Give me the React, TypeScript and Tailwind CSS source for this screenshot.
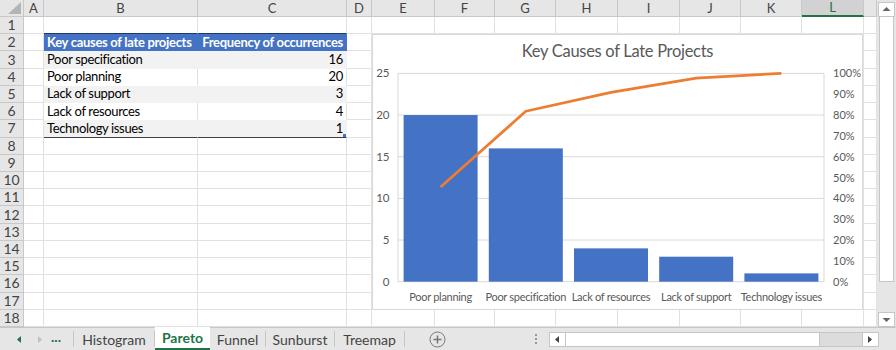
import React from "react";

const COLUMNS = ["A", "B", "C", "D", "E", "F", "G", "H", "I", "J", "K", "L", ""];

const TABLE = [
  { cause: "Poor specification", count: 16 },
  { cause: "Poor planning", count: 20 },
  { cause: "Lack of support", count: 3 },
  { cause: "Lack of resources", count: 4 },
  { cause: "Technology issues", count: 1 },
];

const SORTED = [...TABLE].sort((a, b) => b.count - a.count);
const TOTAL = SORTED.reduce((sum, d) => sum + d.count, 0);

function cellClass(row: number, col: number) {
  const inTable = col === 2 || col === 3;
  if (inTable && row === 1) return "border-r border-b border-r-[#e1e1e1] border-b-[#1f3864]";
  if (inTable && row === 2) return "bg-[#4472c4] border-r border-b border-[#4472c4] text-white font-bold tracking-[-0.3px]";
  if (inTable && row === 7) return "bg-[#f2f2f2] border-r border-b border-r-[#f2f2f2] border-b-[#404040] tracking-[-0.35px]";
  if (inTable && (row === 3 || row === 5)) return "bg-[#f2f2f2] border-r border-b border-[#f2f2f2] tracking-[-0.35px]";
  if (inTable && (row === 4 || row === 6)) return "bg-white border-r border-b border-r-[#e1e1e1] border-b-white tracking-[-0.35px]";
  return "border-r border-b border-[#e1e1e1]";
}

function cellContent(row: number, col: number) {
  if (col === 2) {
    if (row === 2) return "Key causes of late projects";
    if (row >= 3 && row <= 7) return TABLE[row - 3].cause;
  }
  if (col === 3) {
    if (row === 2) return "Frequency of occurrences";
    if (row >= 3 && row <= 7) return String(TABLE[row - 3].count);
  }
  return "";
}

function ParetoChart() {
  const left = 26;
  const right = 452;
  const base = 247.7;
  const top = 39.4;
  const catW = (right - left) / SORTED.length;
  const unit = (base - top) / 25;
  let running = 0;
  const points = SORTED.map((d, i) => {
    running += d.count;
    const x = left + (i + 0.5) * catW;
    const y = base - (running / TOTAL) * (base - top);
    return `${x},${y}`;
  }).join(" ");

  return (
    <svg width={491} height={276} className="block" fontFamily="Lato, sans-serif">
      <rect x={0.5} y={0.5} width={490} height={275} fill="white" stroke="#d9d9d9" />
      <text x={245.5} y={23} textAnchor="middle" fontSize={16.5} letterSpacing={-0.3} fill="#595959">
        Key Causes of Late Projects
      </text>
      {[0, 1, 2, 3, 4, 5].map((i) => (
        <g key={i}>
          <line x1={left} x2={right} y1={base - i * 5 * unit} y2={base - i * 5 * unit} stroke="#d9d9d9" />
          <text x={17.5} y={base - i * 5 * unit + 4} textAnchor="end" fontSize={11.5} fill="#595959">
            {i * 5}
          </text>
        </g>
      ))}
      <line x1={left} x2={left} y1={top} y2={base} stroke="#d9d9d9" />
      <line x1={right} x2={right} y1={top} y2={base} stroke="#d9d9d9" />
      {Array.from({ length: 11 }, (_, k) => (
        <text key={k} x={461} y={base - k * 0.1 * (base - top) + 4} fontSize={11} fill="#595959">
          {k * 10}%
        </text>
      ))}
      {SORTED.map((d, i) => (
        <g key={d.cause}>
          <rect
            x={left + i * catW + 5.6}
            y={base - d.count * unit}
            width={74}
            height={d.count * unit}
            fill="#4472c4"
          />
          <text
            x={left + (i + 0.5) * catW}
            y={267}
            textAnchor="middle"
            fontSize={11}
            letterSpacing={-0.3}
            fill="#595959"
          >
            {d.cause}
          </text>
        </g>
      ))}
      <polyline points={points} fill="none" stroke="#ed7d31" strokeWidth={2.75} strokeLinejoin="round" />
    </svg>
  );
}

function Arrow({ dir, color }: { dir: "left" | "right" | "up" | "down"; color: string }) {
  const d = {
    left: "M6 1 L2 4.5 L6 8 Z",
    right: "M2 1 L6 4.5 L2 8 Z",
    up: "M0.5 6 L4.5 2 L8.5 6 Z",
    down: "M0.5 3 L4.5 7 L8.5 3 Z",
  }[dir];
  return (
    <svg width={9} height={9} viewBox="0 0 9 9">
      <path d={d} fill={color} />
    </svg>
  );
}

export default function App() {
  return (
    <div className="w-[896px] h-[350px] overflow-hidden bg-white font-['Lato',sans-serif] text-[13px] text-black relative">
      <div className="flex h-[327px]">
        <div className="w-[877px] relative">
          <div className="grid grid-cols-[24px_20px_154px_149px_25px_63px_60px_61px_62px_62px_61px_61px_62px_13px] h-[17px]">
            <div className="bg-[#e6e6e6] border-r border-b border-[#c8c8c8] flex items-end justify-end p-[2px]">
              <svg width={13} height={12} viewBox="0 0 13 12">
                <path d="M13 0 L13 12 L0 12 Z" fill="#b4b4b4" />
              </svg>
            </div>
            {COLUMNS.map((c, i) =>
              c === "L" ? (
                <div
                  key={i}
                  className="bg-[#d2d2d2] border-r border-[#c8c8c8] border-b-2 border-b-[#217346] flex items-center justify-center text-[#217346] text-[13px] leading-none"
                >
                  {c}
                </div>
              ) : (
                <div
                  key={i}
                  className="bg-[#e6e6e6] border-r border-b border-[#c8c8c8] flex items-center justify-center text-[#444444] text-[13px] leading-none"
                >
                  {c}
                </div>
              )
            )}
          </div>
          <div className="grid grid-cols-[24px_20px_154px_149px_25px_63px_60px_61px_62px_62px_61px_61px_62px_13px] grid-rows-[repeat(18,minmax(0,1fr))] h-[310px]">
            {Array.from({ length: 18 }, (_, r) => {
              const row = r + 1;
              return (
                <React.Fragment key={row}>
                  <div className="bg-[#e6e6e6] border-r border-b border-[#c8c8c8] flex items-center justify-center text-[#444444] text-[14px] leading-none">
                    {row}
                  </div>
                  {COLUMNS.map((_, c) => {
                    const col = c + 1;
                    const text = cellContent(row, col);
                    return (
                      <div
                        key={col}
                        className={`${cellClass(row, col)} flex items-center ${
                          col === 3 ? "justify-end pr-[3px]" : "pl-[3px]"
                        } whitespace-nowrap leading-none overflow-visible relative`}
                      >
                        {text}
                        {row === 7 && col === 3 && (
                          <span className="absolute right-0 bottom-0 w-[3px] h-[3px] bg-[#4472c4]" />
                        )}
                      </div>
                    );
                  })}
                </React.Fragment>
              );
            })}
          </div>
          <div className="absolute left-[372px] top-[34px]">
            <ParetoChart />
          </div>
        </div>
        <div className="w-[19px] bg-[#e6e6e6] flex flex-col items-center pt-[2px] pb-0">
          <div className="w-[17px] h-[15px] bg-white border border-[#c6c6c6] flex items-center justify-center">
            <Arrow dir="up" color="#666666" />
          </div>
          <div className="w-[15px] h-[265px] bg-white border border-[#c6c6c6] border-t-0" />
          <div className="flex-1" />
          <div className="w-[17px] h-[15px] bg-white border border-[#c6c6c6] flex items-center justify-center">
            <Arrow dir="down" color="#666666" />
          </div>
        </div>
      </div>
      <div className="h-[23px] bg-[#e6e6e6] border-t border-[#c6c6c6] flex items-stretch text-[14px] text-[#444444]">
        <div className="w-[73px] flex items-center">
          <div className="w-[15px]" />
          <Arrow dir="left" color="#217346" />
          <div className="w-[12px]" />
          <Arrow dir="right" color="#c0c0c0" />
          <span className="ml-[6px] font-bold text-[#217346] leading-none pb-[4px]">...</span>
        </div>
        <div className="w-px my-[3px] bg-[#c6c6c6]" />
        <div className="w-[80px] flex items-center justify-center">Histogram</div>
        <div className="w-px my-[3px] bg-[#c6c6c6]" />
        <div className="w-[55px] -mt-px bg-white border-b-2 border-[#217346] flex items-center justify-center font-bold text-[#217346]">
          Pareto
        </div>
        <div className="w-[55px] flex items-center justify-center">Funnel</div>
        <div className="w-px my-[3px] bg-[#c6c6c6]" />
        <div className="w-[68px] flex items-center justify-center">Sunburst</div>
        <div className="w-px my-[3px] bg-[#c6c6c6]" />
        <div className="w-[69px] flex items-center justify-center">Treemap</div>
        <div className="w-px my-[3px] bg-[#c6c6c6]" />
        <div className="w-[64px] flex items-center justify-center">
          <svg width={17} height={17} viewBox="0 0 17 17">
            <circle cx={8.5} cy={8.5} r={7.5} fill="none" stroke="#777777" />
            <path d="M8.5 4.5 V12.5 M4.5 8.5 H12.5" stroke="#777777" strokeWidth={1.5} />
          </svg>
        </div>
        <div className="w-[70px] flex flex-col items-end justify-center gap-[2px] pr-[2px]">
          <span className="w-[2px] h-[2px] bg-[#999999]" />
          <span className="w-[2px] h-[2px] bg-[#999999]" />
          <span className="w-[2px] h-[2px] bg-[#999999]" />
        </div>
        <div className="w-[10px]" />
        <div className="w-[330px] flex items-center">
          <div className="w-full h-[15px] flex bg-[#dcdcdc] border border-[#c6c6c6]">
            <div className="w-[16px] bg-white border-r border-[#c6c6c6] flex items-center justify-center">
              <Arrow dir="left" color="#444444" />
            </div>
            <div className="w-[254px] bg-white border-r border-[#c6c6c6]" />
            <div className="flex-1" />
            <div className="w-[16px] bg-white border-l border-[#c6c6c6] flex items-center justify-center">
              <Arrow dir="right" color="#444444" />
            </div>
          </div>
        </div>
      </div>
    </div>
  );
}
